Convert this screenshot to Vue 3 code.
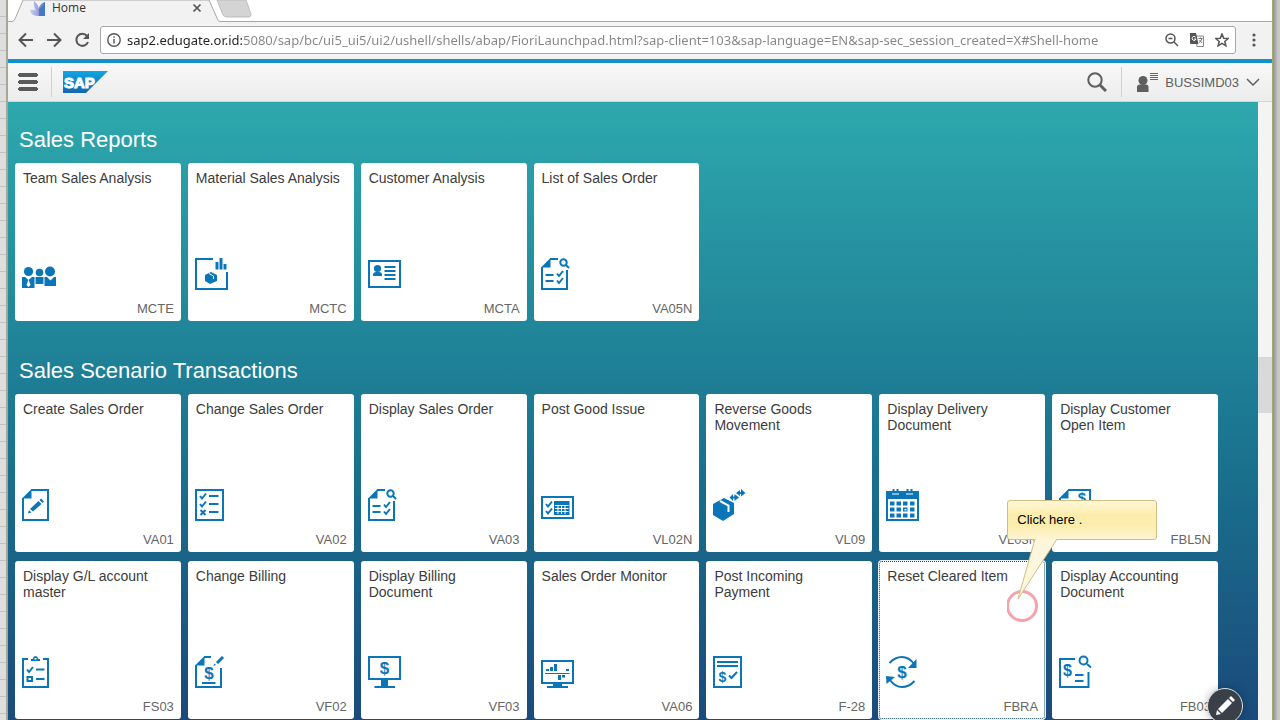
<script setup>
import { ref } from 'vue'

const address = ref('sap2.edugate.or.id:5080/sap/bc/ui5_ui5/ui2/ushell/shells/abap/FioriLaunchpad.html?sap-client=103&sap-language=EN&sap-sec_session_created=X#Shell-home')

const check = (x, y) => `M${x - 3} ${y}l2 2.5 4-5`
const S = (d, w = 2) => ({ d, w })
const docFold = 'M0 9.500L9.500 0V9.500Z'
const docCut = 'M9 1H17M27 12V31H1V9'

const icons = {
  people: {
    fills: ['M0 19H3L6.500 22 10 19H12.500V30H0Z', 'M13.500 19H21.500V26H13.500Z', 'M22.500 19H25L28.500 22.500 32 19H34V28H22.500Z'],
    dots: [[6.5, 13.5, 4.6], [17.5, 14.5, 3.8], [28, 13.5, 5]],
    whites: ['M6.500 21.500L8.500 27 6.500 29 4.500 27Z'],
  },
  boxChart: {
    strokes: [S('M18 1H1V31H32V14')],
    fills: ['M20.500 4h3v7.500h-3z', 'M24.500 0h3v11.500h-3z', 'M28.500 6h3v5.500h-3z', 'M10 17L16 14 22 17V23L15 26 10 23Z'],
    thin: ['M14 15.500L18.500 18V21'],
  },
  card: {
    strokes: [S('M1 3H32V29H1Z'), S('M16.500 9H27.500M16.500 13H27.500M16.500 17H27.500M16.500 21H27.500')],
    fills: ['M5 18V16Q6 14 8 14H11Q13.500 14 14 16V18Z'],
    dots: [[9.5, 10.5, 3.6]],
  },
  docSearch: {
    strokes: [S(docCut.replace('M27', 'M26')), S('M4.500 17H12.500M4.500 23H12.500'), S(check(19, 15.5)), S(check(19, 22.5)), S('M25 7L28 10')],
    fills: [docFold],
    rings: [[22.5, 4.5, 3.2]],
  },
  docEdit: {
    strokes: [S('M9 1H26V31H1V9')],
    fills: [docFold, 'M6 24.500L7 21 9.500 23.500Z', 'M8 20L16.500 12 19.500 15 11 22.500Z', 'M17.500 11L19 9.500 22 12.500 20.500 14Z'],
  },
  checklist: {
    strokes: [S('M1 1H28V31H1Z'), S('M14 7H23.500M14 15H23.500M14 23H23.500'), S(check(8, 7)), S(check(8, 15)), S('M5.500 21L10.500 26M10.500 21L5.500 26')],
  },
  tableCheck: {
    strokes: [S('M1 8H32V29H1Z'), S(check(8, 15)), S(check(8, 22))],
    fills: ['M13 12H28.500V26H13Z'],
    thin: ['M14 16.500H27.500M14 19.500H27.500M14 22.500H27.500M17 16.500V25M20.500 16.500V25M24 16.500V25'],
  },
  boxArrows: {
    fills: ['M0 15L11 9 21 14V25L10 32 0 26Z', 'M16.500 8.500L20 5V7.500H21.500V5L26 8.500 21.500 12V9.500H20V12Z', 'M23 4L27 1V3H28V0L32.500 4 28 7.500V5H27V7Z'],
    whiteLines: ['M7 12L15.500 16.500V23'],
  },
  calendar: {
    strokes: [S('M1 3H32V31H1Z'), S('M7.500 0V5M11.500 0V5M21.500 0V5M25.500 0V5', 2)],
    fills: ['M0 2H33V10H0Z', ...[4, 10.5, 17, 24].flatMap(x => [12.5, 18.5, 24.5].map(y => `M${x} ${y}h4.500v4h-4.500z`))],
    thin: ['M6 5H13M20 5H27'],
    whites: ['M18.500 20H20.500V21.500H18.500Z'],
  },
  docMoney: { strokes: [S('M9 1H31V31H1V9')], fills: [docFold], money: [23, 14, 15] },
  clipboard: {
    strokes: [S('M6 3H1V31H26V3H21'), S('M14 13.500H22.500M14 23H22.500'), S('M5.500 21H10V25H5.500Z'), S(check(8, 13.5))],
    fills: ['M9 5V3H10.500Q11.500 0 13.500 0T16.500 3H18V5Z'],
    whites: ['M12.500 2H14.500V3.500H12.500Z'],
  },
  invoiceEdit: {
    strokes: [S('M9 1H16M26 12V31H1V9'), S('M7 27H20.500'), S('M22 7L28 1', 3)],
    fills: [docFold, 'M18.500 10L19.500 7.500 21 9Z'], money: [14, 23, 17],
  },
  monitorMoney: { strokes: [S('M1 1H32V23H1Z')], fills: ['M13 24H20V30H27V32H6.500V30H13Z'], money: [16.5, 18, 17] },
  monitorChart: {
    strokes: [S('M1 5H32V27H1Z'), S('M4 17.500H28.500', 1)],
    fills: ['M12 28H21V30H27V32H6V30H12Z', 'M5 13h3v2H5z', 'M9 11h3v4H9z', 'M13 8h3v7h-3z', 'M25 13h3v2h-3z', 'M17 19h3v5h-3z', 'M21 19h3v2.500h-3z'],
  },
  payment: { strokes: [S('M1 1H28V31H1Z'), S('M4 6H25M4 10H25'), S('M16 19.500L18.500 22 24 16')], money: [9.5, 25.5, 14] },
  reset: {
    strokes: [S('M3.500 7Q9 1 16 1T28 8'), S('M28.500 25Q23 31 16 31T4 24')],
    fills: ['M30.500 3V12H22Z', 'M0 20L9 21 .500 28Z'], money: [16, 22, 17],
  },
  accounting: {
    strokes: [S('M16 3H1V31H29.500V16'), S('M16 19H24.500M16 25H24.500'), S('M28 8L32 11.500')],
    rings: [[24.5, 4.5, 4]], money: [8.5, 20, 16],
  },
}

const groups = [
  { title: 'Sales Reports', tiles: [
    ['Team Sales Analysis', 'MCTE', 'people'],
    ['Material Sales Analysis', 'MCTC', 'boxChart'],
    ['Customer Analysis', 'MCTA', 'card'],
    ['List of Sales Order', 'VA05N', 'docSearch'],
  ] },
  { title: 'Sales Scenario Transactions', tiles: [
    ['Create Sales Order', 'VA01', 'docEdit'],
    ['Change Sales Order', 'VA02', 'checklist'],
    ['Display Sales Order', 'VA03', 'docSearch'],
    ['Post Good Issue', 'VL02N', 'tableCheck'],
    ['Reverse Goods Movement', 'VL09', 'boxArrows'],
    ['Display Delivery Document', 'VL03N', 'calendar'],
    ['Display Customer Open Item', 'FBL5N', 'docMoney'],
    ['Display G/L account master', 'FS03', 'clipboard'],
    ['Change Billing', 'VF02', 'invoiceEdit'],
    ['Display Billing Document', 'VF03', 'monitorMoney'],
    ['Sales Order Monitor', 'VA06', 'monitorChart'],
    ['Post Incoming Payment', 'F-28', 'payment'],
    ['Reset Cleared Item', 'FBRA', 'reset'],
    ['Display Accounting Document', 'FB03', 'accounting'],
  ] },
]
</script>

<template>
  <div class="desktop">
    <div class="edge edge-left"></div>
    <div class="window">
      <div class="tabs">
        <svg class="tab-shape" width="260" height="22" viewBox="0 0 260 22" aria-hidden="true">
          <path d="M0 21.500H4Q6 21 7 19L15 0H201L209 18Q210 21.500 212 21.500H260V23H0Z" fill="#f2f2f2" stroke="#a8a8a8" />
          <path d="M209 0H238L243 14Q243 17 241 17H219Q216 17 215 15Z" fill="#d4d4d4" stroke="#bdbdbd" />
        </svg>
        <div class="tab">
          <svg width="16" height="16" viewBox="0 0 16 16" aria-hidden="true">
            <defs><linearGradient id="fav" x1="0" x2="1"><stop stop-color="#b9d9f0" /><stop offset=".5" stop-color="#a9a0dc" /><stop offset="1" stop-color="#2c86c6" /></linearGradient></defs>
            <path d="M0 10Q4 9 6 11Q3 6 4 1Q8 4 8.500 8Q11 3 15 2V16H7Q0 15 0 10Z" fill="url(#fav)" />
            <path d="M9 9L15 4V16H9Z" fill="#4779c3" />
          </svg>
          <span>Home</span>
          <button class="plain tab-close" aria-label="Close tab">
            <svg width="10" height="10" viewBox="0 0 10 10"><path d="M1.500 1.500L8.500 8.500M8.500 1.500L1.500 8.500" stroke="#555" stroke-width="1.700" /></svg>
          </button>
        </div>
      </div>

      <div class="toolbar">
        <button class="plain" aria-label="Back"><svg width="16" height="16" viewBox="0 0 16 16" class="line"><path d="M15 8H2M8 1.500L1.500 8 8 14.500" /></svg></button>
        <button class="plain" aria-label="Forward"><svg width="16" height="16" viewBox="0 0 16 16" class="line"><path d="M1 8H14M8 1.500L14.500 8 8 14.500" /></svg></button>
        <button class="plain" aria-label="Reload"><svg width="16" height="16" viewBox="0 0 16 16" class="line"><path d="M13 4A6 6 0 1 0 14 10" /><path d="M15 1V7H9Z" fill="#555" stroke="none" /></svg></button>
        <div class="omnibox">
          <svg width="14" height="14" viewBox="0 0 14 14" class="info" aria-hidden="true"><circle cx="7" cy="7" r="6.200" /><path d="M7 6V10.500M7 3.200V4.800" /></svg>
          <input v-model="address" class="url" type="text" aria-label="Address" spellcheck="false" />
          <button class="plain" aria-label="Zoom"><svg width="14" height="14" viewBox="0 0 14 14" class="small"><circle cx="5.500" cy="5.500" r="4.500" /><path d="M9 9L13 13M3.500 5.500H7.500" /></svg></button>
          <button class="plain" aria-label="Translate">
            <svg width="14" height="14" viewBox="0 0 14 14"><path d="M6 3H13.500V13.500H7Z" fill="#fff" stroke="#888" /><path d="M0 0H6L8.500 11H1Q0 11 0 10Z" fill="#555" /><path d="M5.500 4A2 2 0 1 0 6 6H4" stroke="#fff" fill="none" /><path d="M8.500 5.500H12.500M10.500 4.500V5.500M12 5.500Q11.500 8 9 9.500M9.500 7L12 10" stroke="#777" fill="none" /></svg>
          </button>
          <button class="plain" aria-label="Bookmark"><svg width="14" height="14" viewBox="0 0 14 14" class="small"><path d="M7 1L8.700 5.200 13.200 5.500 9.800 8.400 10.900 12.800 7 10.400 3.100 12.800 4.200 8.400 .8 5.500 5.300 5.200Z" /></svg></button>
        </div>
        <button class="plain" aria-label="Menu"><svg width="4" height="14" viewBox="0 0 4 14" fill="#555"><circle cx="2" cy="2" r="1.600" /><circle cx="2" cy="7" r="1.600" /><circle cx="2" cy="12" r="1.600" /></svg></button>
      </div>

      <header class="shell">
        <button class="plain menu" aria-label="Navigation"><svg width="20" height="18" viewBox="0 0 20 18"><path d="M1 2H19M1 9H19M1 16H19" stroke="#5a5a5a" stroke-width="4" stroke-linejoin="round" /><path d="M0 1V3M0 8V10M0 15V17M20 1V3M20 8V10M20 15V17" stroke="#5a5a5a" stroke-width="2" /></svg></button>
        <a class="logo" href="#" aria-label="SAP home">
          <svg width="45" height="22" viewBox="0 0 45 22">
            <defs><linearGradient id="sap" x1="0" x2="0" y1="0" y2="1"><stop stop-color="#11a5e4" /><stop offset="1" stop-color="#1666ad" /></linearGradient></defs>
            <path d="M0 0H45L23 22H0Z" fill="url(#sap)" />
            <text x="1" y="17" class="logo-text">SAP</text>
          </svg>
        </a>
        <button class="plain search" aria-label="Search"><svg width="20" height="20" viewBox="0 0 20 20" fill="none" stroke="#5f5f5f"><circle cx="8" cy="8" r="6.700" stroke-width="2" /><path d="M12.500 12.500L19 19" stroke-width="3" /></svg></button>
        <button class="plain user">
          <svg width="21" height="20" viewBox="0 0 21 20" aria-hidden="true"><circle cx="6" cy="8.500" r="4.500" fill="#5f5f5f" /><path d="M0 20V15Q0 12.500 3 12.500H9Q11.500 12.500 11.500 15V20Z" fill="#5f5f5f" /><path d="M13 1.500H21M13 3.500H21M13 5.500H21M13 7.500H21" stroke="#666" /></svg>
          <span>BUSSIMD03</span>
          <svg width="14" height="8" viewBox="0 0 14 8" aria-hidden="true"><path d="M1 1L7 7 13 1" fill="none" stroke="#5f5f5f" stroke-width="1.500" /></svg>
        </button>
      </header>

      <div class="viewport">
        <main class="page">
          <section v-for="group in groups" :key="group.title">
            <h2>{{ group.title }}</h2>
            <div class="tiles">
              <div v-for="[title, code, icon] in group.tiles" :key="code" class="cell">
                <a href="#" class="tile" :class="{ focused: code === 'FBRA' }">
                  <span class="title">{{ title }}</span>
                  <svg class="icon" width="36" height="33" viewBox="0 0 36 33" aria-hidden="true">
                    <path v-for="d in icons[icon].fills" :key="d" :d="d" class="fill" />
                    <path v-for="s in icons[icon].strokes" :key="s.d" :d="s.d" :stroke-width="s.w" class="stroke" />
                    <circle v-for="c in icons[icon].dots" :key="c[0]" :cx="c[0]" :cy="c[1]" :r="c[2]" class="fill" />
                    <circle v-for="c in icons[icon].rings" :key="c[0]" :cx="c[0]" :cy="c[1]" :r="c[2]" class="stroke" stroke-width="2" />
                    <path v-for="d in icons[icon].whites" :key="d" :d="d" fill="#fff" />
                    <path v-for="d in icons[icon].thin" :key="d" :d="d" class="thin" />
                    <path v-for="d in icons[icon].whiteLines" :key="d" :d="d" class="gap-line" />
                    <text v-if="icons[icon].money" :x="icons[icon].money[0]" :y="icons[icon].money[1]" :font-size="icons[icon].money[2]" class="money">$</text>
                  </svg>
                  <span class="code">{{ code }}</span>
                </a>
                <div v-if="code === 'FBRA'" class="hint">
                  <div class="bubble" role="tooltip">Click here .</div>
                  <svg width="60" height="84" viewBox="0 0 60 84" aria-hidden="true">
                    <circle cx="15" cy="67" r="14.500" fill="none" stroke="#f4a3aa" stroke-width="3" />
                    <path d="M28 0L11 60 50 0" fill="#fcf7dc" stroke="#d3bd80" />
                  </svg>
                </div>
              </div>
            </div>
          </section>
        </main>
        <div class="scrollbar"><div class="thumb"></div></div>
        <button class="edit" aria-label="Edit home page">
          <svg width="20" height="20" viewBox="0 0 20 20" fill="#fff"><path d="M1 19L2 14 6 18Z" /><path d="M3 13L13 3 17 7 7 17Z" /><path d="M14 2L16 0 20 4 18 6Z" /></svg>
        </button>
      </div>
    </div>
    <div class="edge edge-right"></div>
  </div>
</template>

<style>
body { overflow: hidden; }
</style>

<style scoped>
* { box-sizing: border-box; }
.desktop { display: grid; grid-template-columns: 8px minmax(0, 1fr) 8px; height: 100vh; overflow: hidden; font-family: "Liberation Sans", Arial, sans-serif; }
.edge-left { border-right: 2px solid #a5a894; background: repeating-linear-gradient(#dedede 0 16px, #c2c2c4 16px 17px); }
.edge-right { border-left: 1px solid #a3a86c; background: linear-gradient(90deg, #8f8f8f, #c8c8cb 5px); }
.window { display: flex; flex-direction: column; min-width: 0; min-height: 0; }
.plain { display: flex; align-items: center; padding: 0; border: 0; background: none; font: inherit; color: inherit; }

.tabs { position: relative; flex: none; height: 22px; background: #fff; border-bottom: 1px solid #a8a8a8; }
.tab-shape { position: absolute; left: 0; top: 0; }
.tab { position: relative; display: flex; align-items: center; gap: 6px; width: 194px; height: 16px; padding-left: 22px; font: 12px/16px "Open Sans", "Noto Sans", sans-serif; color: #333; }
.tab-close { margin-left: auto; }

.toolbar { flex: none; display: flex; align-items: center; gap: 12px; height: 37px; padding: 0 16px 2px 10px; background: #f2f2f2; }
.line { fill: none; stroke: #555; stroke-width: 2; }
.omnibox { flex: 1; min-width: 0; display: flex; align-items: center; gap: 11px; height: 28px; padding: 0 6px; margin: 0 4px 0 -2px; border: 1px solid #a9a9a9; border-radius: 3px; background: #fff; }
.info { flex: none; fill: none; stroke: #555; stroke-width: 1.400; }
.small { fill: none; stroke: #555; stroke-width: 1.500; }
.url { flex: 1; min-width: 0; height: 24px; padding: 0; margin-left: -5px; border: 0; outline: 0; color: transparent; background: linear-gradient(90deg, #222 116px, #858585 116px); -webkit-background-clip: text; background-clip: text; font: 13px/24px "Noto Sans", "Open Sans", sans-serif; }

.shell { flex: none; display: flex; align-items: center; height: 43px; padding-right: 12px; border-top: 4px solid #1590cb; border-bottom: 1px solid #d4d4d4; background: linear-gradient(#f8f8f8, #ececec); color: #5f5f5f; }
.menu { height: 30px; width: 44px; padding-left: 10px; border-right: 1px solid #d0d0d0; }
.logo { display: flex; margin-left: 11px; }
.logo-text { font: bold 15px "Liberation Sans", Arial, sans-serif; fill: #fff; stroke: #fff; }
.search { margin-left: auto; }
.user { height: 30px; margin-left: 14px; padding-left: 15px; gap: 7px; border-left: 1px solid #d0d0d0; font-size: 13px; }

.viewport { position: relative; flex: 1; min-height: 0; display: flex; background: linear-gradient(#2da8ad, #19708d 60%, #1b4a7b); }
.page { flex: 1; min-width: 0; padding: 20px 40px 0 7px; overflow: hidden; }
h2 { margin: 0 0 5px 4px; font-size: 22px; line-height: 36px; font-weight: 400; color: #fff; }
section + section { margin-top: 32px; }
.tiles { display: grid; grid-template-columns: repeat(7, minmax(0, 1fr)); gap: 9px 7px; }
.cell { position: relative; }
.tile { display: flex; flex-direction: column; height: 158px; padding: 7px 7px 4px; border-radius: 3px; background: #fff; color: #3c3c3c; text-decoration: none; }
.focused { outline: 1px dotted #1d4d66; outline-offset: -1px; box-shadow: 0 0 0 1px #e8f2f5; }
.title { padding: 0 5px 0 1px; font-size: 14px; line-height: 16px; }
.icon { display: block; margin-top: auto; overflow: visible; }
.fill { fill: #0a76b8; }
.stroke { fill: none; stroke: #0a76b8; }
.thin { fill: none; stroke: #fff; stroke-width: 1; }
.gap-line { fill: none; stroke: #fff; stroke-width: 2; }
.money { font-family: "Liberation Sans", Arial, sans-serif; font-weight: 700; text-anchor: middle; fill: #0a76b8; }
.code { align-self: flex-end; margin-top: 10px; font-size: 13px; line-height: 16px; color: #666; }

.hint { position: absolute; z-index: 2; left: 128px; top: -61px; }
.hint svg { position: absolute; left: 0; top: 39px; }
.bubble { width: 150px; height: 40px; padding-left: 9px; border: 1px solid #d3bd80; border-radius: 3px; background: linear-gradient(#fff8d8, #fdedad 35%, #fdedad 65%, #fcf5d4); font-size: 13px; line-height: 38px; color: #000; }

.scrollbar { flex: none; width: 14px; padding-top: 255px; background: #f4f4f5; }
.thumb { height: 56px; background: #d9d9dc; }
.edit { position: absolute; right: 29px; bottom: -4px; display: flex; align-items: center; justify-content: center; width: 36px; height: 36px; padding: 0; border: 1px solid #d8e2e8; border-radius: 50%; background: #3a4048; box-shadow: 0 0 8px #0004; }
</style>
